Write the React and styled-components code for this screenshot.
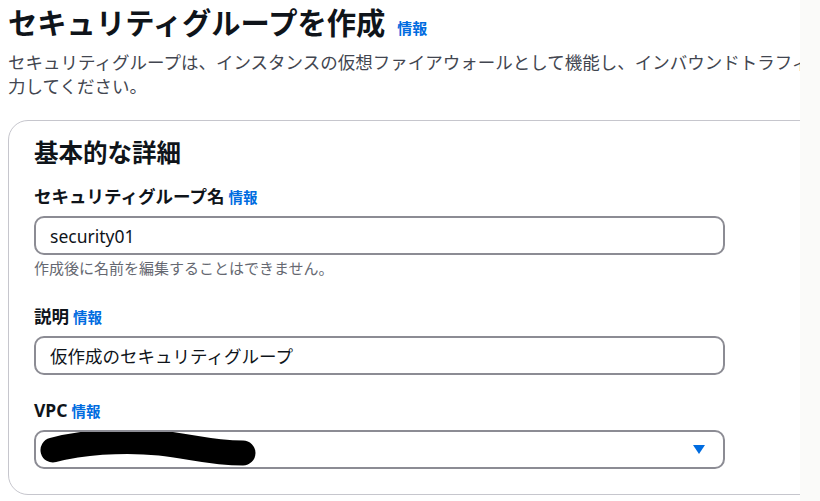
import React from "react";
import styled, { createGlobalStyle } from "styled-components";

const GlobalStyle = createGlobalStyle`
  html, body {
    margin: 0;
    padding: 0;
    background: #ffffff;
    overflow: hidden;
  }
  body {
    font-family: "Noto Sans", "Noto Sans CJK JP", sans-serif;
    color: #0f141a;
  }
`;

const Page = styled.div`
  display: flex;
  width: 820px;
  height: 501px;
`;

const Main = styled.main`
  width: 800px;
  overflow: hidden;
  padding: 5px 0 0 8px;
  box-sizing: border-box;
`;

const Rail = styled.aside`
  width: 20px;
  background: #fafaf9;
`;

const Header = styled.header`
  width: 792px;
`;

const TitleRow = styled.div`
  display: flex;
  align-items: baseline;
`;

const Title = styled.h1`
  margin: 0;
  font-size: 29.3px;
  line-height: 36px;
  font-weight: 700;
  color: #0f141a;
`;

const InfoLink = styled.a`
  font-size: ${(p) => (p.$large ? "15px" : "14.5px")};
  font-weight: 700;
  color: #006ce0;
  text-decoration: none;
  margin-left: ${(p) => (p.$large ? "12px" : "4px")};
  cursor: pointer;
`;

const Description = styled.p`
  margin: 9px 0 0;
  font-size: 17.5px;
  line-height: 24px;
  color: #424650;
  white-space: nowrap;
  overflow: hidden;
`;

const Card = styled.section`
  margin-top: 22px;
  width: 1000px;
  border: 1px solid #c6c6cd;
  border-radius: 20px;
  padding: 17px 25px 25px;
  box-sizing: border-box;
  display: flex;
  flex-direction: column;
`;

const CardTitle = styled.h2`
  margin: 0 0 17px;
  font-size: 24.5px;
  line-height: 30px;
  font-weight: 700;
  color: #0f141a;
`;

const Fields = styled.div`
  display: flex;
  flex-direction: column;
  gap: 24px;
`;

const Field = styled.div`
  display: flex;
  flex-direction: column;
`;

const Label = styled.label`
  display: flex;
  align-items: baseline;
  font-size: 17.5px;
  line-height: 22px;
  font-weight: 700;
  color: #0f141a;
  margin-bottom: 8px;
`;

const Input = styled.input`
  width: 691px;
  height: 39px;
  box-sizing: border-box;
  border: 2px solid #8c8c94;
  border-radius: 10px;
  padding: 0 14px;
  font-family: "Noto Sans", "Noto Sans CJK JP", sans-serif;
  font-size: 17.5px;
  color: #0f141a;
  background: #ffffff;
  outline: none;
`;

const Hint = styled.div`
  margin-top: 3px;
  padding-bottom: 3px;
  font-size: 15px;
  line-height: 20px;
  color: #656871;
`;

const Select = styled.div`
  width: 691px;
  height: 39px;
  box-sizing: border-box;
  border: 2px solid #8c8c94;
  border-radius: 10px;
  padding: 0 18px 0 4px;
  display: flex;
  align-items: center;
  justify-content: space-between;
  background: #ffffff;
`;

function Redaction() {
  return (
    <svg width="220" height="35" viewBox="0 0 220 35">
      <path
        d="M13 18 C40 11 80 7 120 11 C150 14 170 21 203 21"
        fill="none"
        stroke="#000"
        strokeWidth="25"
        strokeLinecap="round"
      />
    </svg>
  );
}

function Caret() {
  return (
    <svg width="12" height="9" viewBox="0 0 12 9">
      <path d="M0 0 H12 L6 9 Z" fill="#006ce0" />
    </svg>
  );
}

export default function App() {
  return (
    <>
      <GlobalStyle />
      <Page>
        <Main>
          <Header>
            <TitleRow>
              <Title>セキュリティグループを作成</Title>
              <InfoLink $large>情報</InfoLink>
            </TitleRow>
            <Description>
              セキュリティグループは、インスタンスの仮想ファイアウォールとして機能し、インバウンドトラフィックとアウトバウンドトラフィックを制御します。新しいセキュリティグループを作成するには、以下のフィールドに入
              <br />
              力してください。
            </Description>
          </Header>
          <Card>
            <CardTitle>基本的な詳細</CardTitle>
            <Fields>
              <Field>
                <Label>
                  セキュリティグループ名<InfoLink>情報</InfoLink>
                </Label>
                <Input readOnly defaultValue="security01" />
                <Hint>作成後に名前を編集することはできません。</Hint>
              </Field>
              <Field>
                <Label>
                  説明<InfoLink>情報</InfoLink>
                </Label>
                <Input readOnly defaultValue="仮作成のセキュリティグループ" />
              </Field>
              <Field>
                <Label>
                  VPC<InfoLink>情報</InfoLink>
                </Label>
                <Select>
                  <Redaction />
                  <Caret />
                </Select>
              </Field>
            </Fields>
          </Card>
        </Main>
        <Rail />
      </Page>
    </>
  );
}
